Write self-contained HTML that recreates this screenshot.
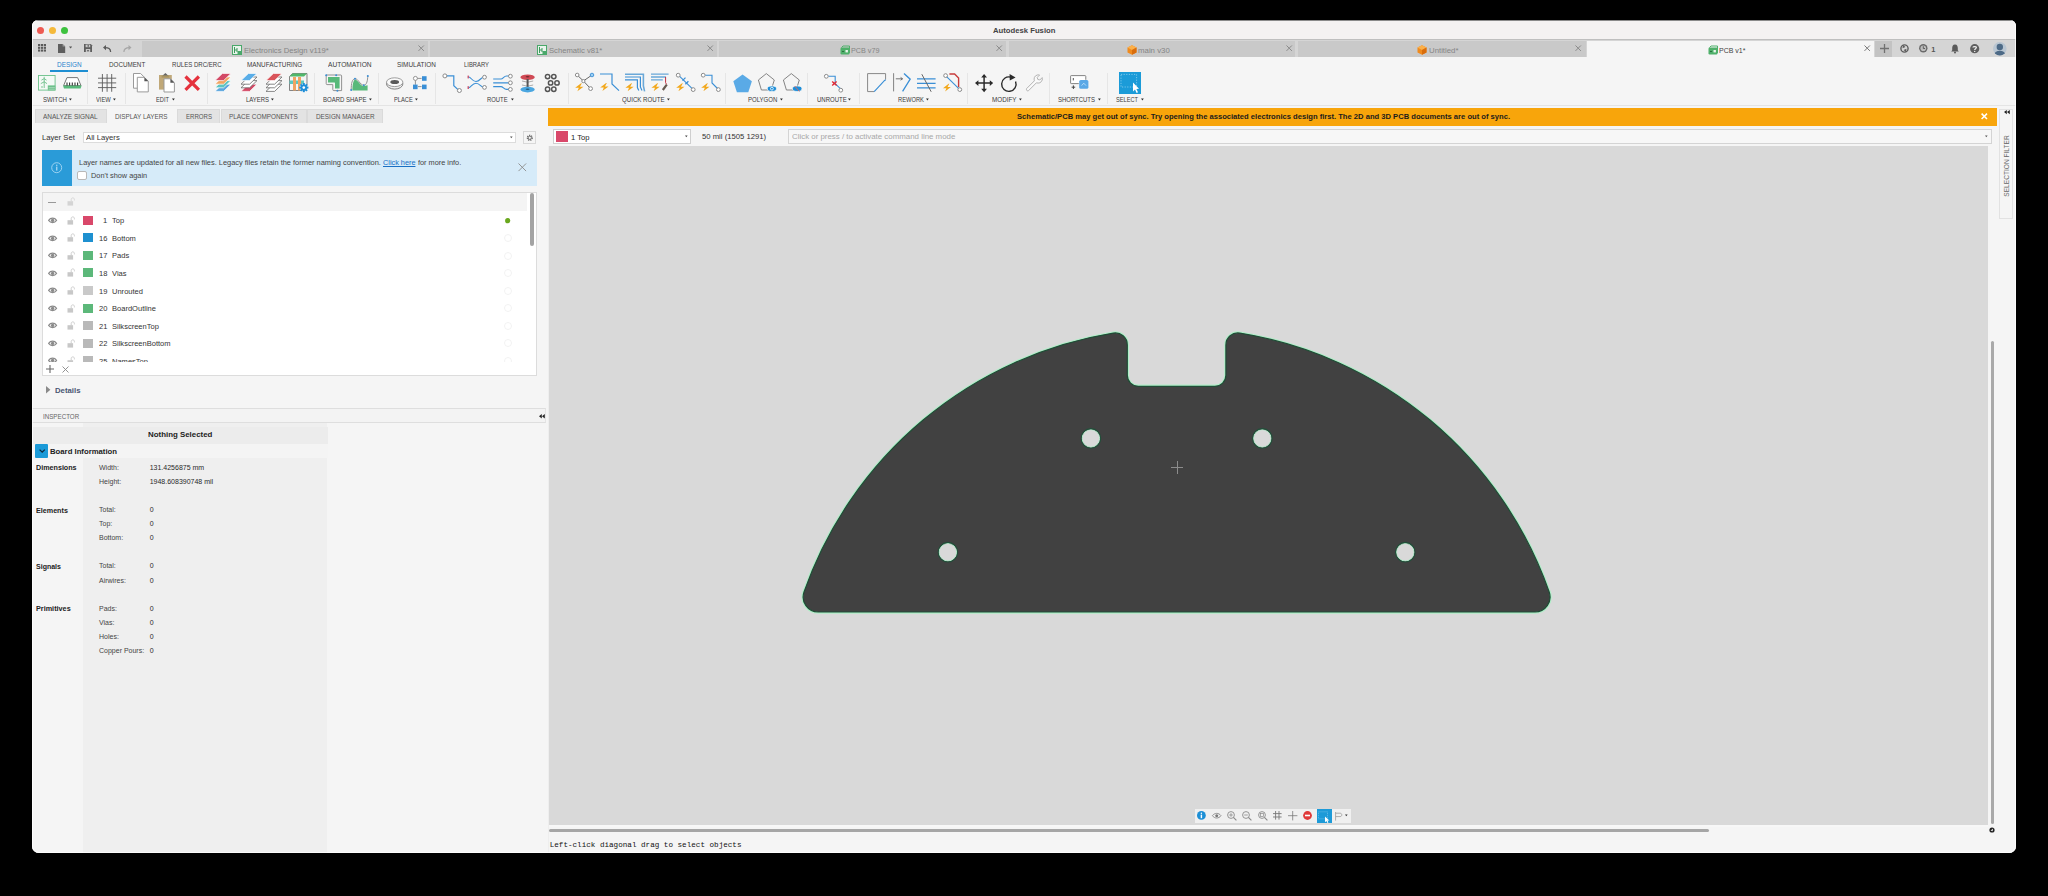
<!DOCTYPE html>
<html><head><meta charset="utf-8">
<style>
*{box-sizing:border-box;margin:0;padding:0}
html,body{width:2048px;height:896px;overflow:hidden;background:#000;font-family:"Liberation Sans",sans-serif;color:#333}
#win{position:absolute;left:32px;top:20px;width:1984px;height:833px;border-radius:6px 6px 7px 7px;overflow:hidden;background:#f5f5f5}
#pg{position:absolute;left:-32px;top:-20px;width:2048px;height:896px}
.a{position:absolute}
.t{position:absolute;white-space:nowrap;line-height:1;transform-origin:0 0}
svg{overflow:visible}
</style></head><body>
<div id="win"><div id="pg">

<div class="a" style="left:0px;top:20px;width:2048.00px;height:19.00px;background:#f4f2f2;"></div>
<div class="a" style="left:0px;top:20px;width:2048.00px;height:1.00px;background:#8a8a8a;"></div>
<div class="a" style="left:37.3px;top:27px;width:7.20px;height:7.20px;background:#ee5a52;border-radius:50%"></div>
<div class="a" style="left:49.15px;top:27px;width:7.20px;height:7.20px;background:#f5b93a;border-radius:50%"></div>
<div class="a" style="left:60.9px;top:27px;width:7.20px;height:7.20px;background:#3ec23f;border-radius:50%"></div>
<div class="t" style="left:992.5px;top:27.00px;font-size:7.82px;font-family:'Liberation Sans',sans-serif;font-weight:bold;color:#444;transform:scaleX(0.9853);">Autodesk Fusion</div>
<div class="a" style="left:0px;top:39px;width:2048.00px;height:18.00px;background:#d5d5d5;"></div>
<div class="a" style="left:0px;top:39px;width:2048.00px;height:1.00px;background:#bfbfbf;"></div>
<div class="a" style="left:142px;top:41px;width:286.00px;height:16.00px;background:#c9c9c9;"></div>
<div class="a" style="left:430px;top:41px;width:287.00px;height:16.00px;background:#c9c9c9;"></div>
<div class="a" style="left:719px;top:41px;width:287.00px;height:16.00px;background:#c9c9c9;"></div>
<div class="a" style="left:1009px;top:41px;width:286.00px;height:16.00px;background:#c9c9c9;"></div>
<div class="a" style="left:1298px;top:41px;width:288.00px;height:16.00px;background:#c9c9c9;"></div>
<div class="a" style="left:1587px;top:41px;width:287.00px;height:16.00px;background:#f5f5f5;"></div>
<div class="a" style="left:1875px;top:41px;width:17.00px;height:16.00px;background:#c3c3c3;"></div>
<div class="a" style="left:0px;top:57px;width:2048.00px;height:49.00px;background:#f5f5f5;"></div>
<div class="a" style="left:0px;top:105px;width:2048.00px;height:1.00px;background:#e4e4e4;"></div>
<div class="a" style="left:32px;top:106px;width:516.00px;height:747.00px;background:#f5f5f5;"></div>
<div class="a" style="left:548px;top:106px;width:1468.00px;height:747.00px;background:#f5f5f5;"></div>
<div class="a" style="left:548px;top:107.8px;width:1449.00px;height:17.90px;background:#f8a50b;"></div>
<div class="t" style="left:1016.5px;top:113.00px;font-size:7.54px;font-family:'Liberation Sans',sans-serif;font-weight:bold;color:#1c1c1c;transform:scaleX(1.0086);">Schematic/PCB may get out of sync. Try opening the associated electronics design first. The 2D and 3D PCB documents are out of sync.</div>
<div class="a" style="left:549px;top:146px;width:1439.00px;height:678.50px;background:#d9d9d9;"></div>
<svg class="a" style="left:0;top:0" width="2048" height="896" viewBox="0 0 2048 896">
<path d="M818.17,612.00 L1535.03,612.00 A15,15 0 0 0 1549.18,592.03 A394.9,394.9 0 0 0 1239.82,333.09 A12,12 0 0 0 1225.90,344.94 L1225.90,375.30 A11,11 0 0 1 1214.90,386.30 L1138.30,386.30 A11,11 0 0 1 1127.30,375.30 L1127.30,344.94 A12,12 0 0 0 1113.38,333.09 A394.9,394.9 0 0 0 804.02,592.03 A15,15 0 0 0 818.17,612.00 Z" fill="none" stroke="#b0eec8" stroke-width="3.4"/>
<path d="M818.17,612.00 L1535.03,612.00 A15,15 0 0 0 1549.18,592.03 A394.9,394.9 0 0 0 1239.82,333.09 A12,12 0 0 0 1225.90,344.94 L1225.90,375.30 A11,11 0 0 1 1214.90,386.30 L1138.30,386.30 A11,11 0 0 1 1127.30,375.30 L1127.30,344.94 A12,12 0 0 0 1113.38,333.09 A394.9,394.9 0 0 0 804.02,592.03 A15,15 0 0 0 818.17,612.00 Z" fill="#414141" stroke="#1f4d36" stroke-width="1.2"/>
<g fill="#d9d9d9" stroke="#b2ecca" stroke-width="1.0"><circle cx="1090.9" cy="438.4" r="8.8"/><circle cx="1262.3" cy="438.4" r="8.8"/><circle cx="947.9" cy="552.2" r="8.8"/><circle cx="1405.3" cy="552.2" r="8.8"/></g>
<g fill="none" stroke="#21503a" stroke-width="1.1"><circle cx="1090.9" cy="438.4" r="9.8"/><circle cx="1262.3" cy="438.4" r="9.8"/><circle cx="947.9" cy="552.2" r="9.8"/><circle cx="1405.3" cy="552.2" r="9.8"/></g>
<g stroke="#8c8c8c" stroke-width="1"><line x1="1171" y1="467.5" x2="1183" y2="467.5"/><line x1="1177.5" y1="461" x2="1177.5" y2="474"/></g>
</svg>
<svg class="a" style="left:38.1px;top:44.1px" width="8.4" height="8" viewBox="0 0 8.4 8"><rect x="0.00" y="0.00" width="2.2" height="2.1" fill="#5a5a5a"/><rect x="2.90" y="0.00" width="2.2" height="2.1" fill="#5a5a5a"/><rect x="5.80" y="0.00" width="2.2" height="2.1" fill="#5a5a5a"/><rect x="0.00" y="2.75" width="2.2" height="2.1" fill="#5a5a5a"/><rect x="2.90" y="2.75" width="2.2" height="2.1" fill="#5a5a5a"/><rect x="5.80" y="2.75" width="2.2" height="2.1" fill="#5a5a5a"/><rect x="0.00" y="5.50" width="2.2" height="2.1" fill="#5a5a5a"/><rect x="2.90" y="5.50" width="2.2" height="2.1" fill="#5a5a5a"/><rect x="5.80" y="5.50" width="2.2" height="2.1" fill="#5a5a5a"/></svg>
<svg class="a" style="left:57.7px;top:43.9px" width="7.4" height="9" viewBox="0 0 7.4 9"><path d="M0,0 H4.6 L7.2,2.6 V8.9 H0Z" fill="#5e5e5e"/><path d="M4.6,0 V2.6 H7.2" fill="#9a9a9a"/></svg>
<svg class="a" style="left:68.9px;top:46.1px" width="4.2" height="3.0" viewBox="0 0 4.2 3.0"><path d="M0,0.5 L3.2,0.5 L1.6,2.5Z" fill="#555"/></svg>
<svg class="a" style="left:84px;top:44.4px" width="8" height="8" viewBox="0 0 8 8"><path d="M0,0 H6.8 L8,1.2 V8 H0Z" fill="#5e5e5e"/><rect x="1.6" y="0.6" width="4.6" height="2.6" fill="#c8c8c8"/><rect x="3.6" y="1" width="1.2" height="1.8" fill="#5e5e5e"/><rect x="1.8" y="5" width="4.4" height="3" fill="#c8c8c8"/><rect x="3.2" y="6" width="1.6" height="1.4" fill="#5e5e5e"/></svg>
<svg class="a" style="left:103px;top:45px" width="8.5" height="7.2" viewBox="0 0 8.5 7.2"><path d="M7.6,7 C7.6,3.5 5.5,2.6 2,2.6" fill="none" stroke="#5a5a5a" stroke-width="1.3"/><path d="M0,2.6 L3,0 V5.2Z" fill="#5a5a5a"/></svg>
<svg class="a" style="left:122.5px;top:45px" width="8.5" height="7.2" viewBox="0 0 8.5 7.2"><path d="M0.9,7 C0.9,3.5 3,2.6 6.5,2.6" fill="none" stroke="#a6a6a6" stroke-width="1.2"/><path d="M8.5,2.6 L5.5,0 V5.2Z" fill="#a6a6a6"/></svg>
<svg class="a" style="left:232.2px;top:45.4px" width="10" height="10" viewBox="0 0 10 10"><rect x="0.5" y="0.5" width="9" height="9" fill="#e9f4ec" stroke="#4aa86a" stroke-width="1"/><path d="M2.5,2 V8 M2.5,5 H5 M5,3 V7" stroke="#3d9a5c" stroke-width="1" fill="none"/><rect x="5.5" y="6" width="4" height="3.5" fill="#4aa86a"/></svg>
<div class="t" style="left:243.9px;top:47.00px;font-size:7.96px;font-family:'Liberation Sans',sans-serif;color:#858585;transform:scaleX(0.9647);">Electronics Design v119*</div>
<svg class="a" style="left:417.8px;top:45.4px" width="6.4" height="6.4" viewBox="0 0 6.4 6.4"><path d="M0.5,0.5 L5.9,5.9 M5.9,0.5 L0.5,5.9" stroke="#8a8a8a" stroke-width="1"/></svg>
<svg class="a" style="left:536.6px;top:45.4px" width="10" height="10" viewBox="0 0 10 10"><rect x="0.5" y="0.5" width="9" height="9" fill="#e9f4ec" stroke="#4aa86a" stroke-width="1"/><path d="M2.5,2 V8 M2.5,5 H5 M5,3 V7" stroke="#3d9a5c" stroke-width="1" fill="none"/><rect x="5.5" y="6" width="4" height="3.5" fill="#4aa86a"/></svg>
<div class="t" style="left:549px;top:47.00px;font-size:7.96px;font-family:'Liberation Sans',sans-serif;color:#858585;transform:scaleX(0.9637);">Schematic v81*</div>
<svg class="a" style="left:706.8px;top:45.4px" width="6.4" height="6.4" viewBox="0 0 6.4 6.4"><path d="M0.5,0.5 L5.9,5.9 M5.9,0.5 L0.5,5.9" stroke="#8a8a8a" stroke-width="1"/></svg>
<svg class="a" style="left:839.8px;top:45.6px" width="10" height="9" viewBox="0 0 10 9"><rect x="0.5" y="1.5" width="9" height="7" rx="1.2" fill="#4fb06a"/><path d="M1.5,1.5 L3,0 H9.5 V7" fill="none" stroke="#4fb06a" stroke-width="1"/><rect x="5.5" y="4" width="2.4" height="2.4" fill="#e8f5ea"/><rect x="2" y="5" width="2" height="1" fill="#2d6f40"/></svg>
<div class="t" style="left:850.5px;top:47.00px;font-size:7.96px;font-family:'Liberation Sans',sans-serif;color:#858585;transform:scaleX(0.9072);">PCB v79</div>
<svg class="a" style="left:996.0999999999999px;top:45.4px" width="6.4" height="6.4" viewBox="0 0 6.4 6.4"><path d="M0.5,0.5 L5.9,5.9 M5.9,0.5 L0.5,5.9" stroke="#8a8a8a" stroke-width="1"/></svg>
<svg class="a" style="left:1126.8px;top:45.2px" width="10" height="10" viewBox="0 0 10 10"><path d="M5,0.3 L9.5,2.6 V7.5 L5,9.8 L0.5,7.5 V2.6Z" fill="#f08a1c"/><path d="M5,0.3 L9.5,2.6 L5,4.9 L0.5,2.6Z" fill="#fbb04a"/><path d="M5,4.9 V9.8 L9.5,7.5 V2.6Z" fill="#d96d0c"/></svg>
<div class="t" style="left:1138.2px;top:47.00px;font-size:7.96px;font-family:'Liberation Sans',sans-serif;color:#858585;transform:scaleX(0.9845);">main v30</div>
<svg class="a" style="left:1285.5px;top:45.4px" width="6.4" height="6.4" viewBox="0 0 6.4 6.4"><path d="M0.5,0.5 L5.9,5.9 M5.9,0.5 L0.5,5.9" stroke="#8a8a8a" stroke-width="1"/></svg>
<svg class="a" style="left:1416.6px;top:45.2px" width="10" height="10" viewBox="0 0 10 10"><path d="M5,0.3 L9.5,2.6 V7.5 L5,9.8 L0.5,7.5 V2.6Z" fill="#f08a1c"/><path d="M5,0.3 L9.5,2.6 L5,4.9 L0.5,2.6Z" fill="#fbb04a"/><path d="M5,4.9 V9.8 L9.5,7.5 V2.6Z" fill="#d96d0c"/></svg>
<div class="t" style="left:1428.5px;top:47.00px;font-size:7.96px;font-family:'Liberation Sans',sans-serif;color:#858585;transform:scaleX(0.9804);">Untitled*</div>
<svg class="a" style="left:1574.7px;top:45.4px" width="6.4" height="6.4" viewBox="0 0 6.4 6.4"><path d="M0.5,0.5 L5.9,5.9 M5.9,0.5 L0.5,5.9" stroke="#8a8a8a" stroke-width="1"/></svg>
<svg class="a" style="left:1707.8px;top:45.6px" width="10" height="9" viewBox="0 0 10 9"><rect x="0.5" y="1.5" width="9" height="7" rx="1.2" fill="#4fb06a"/><path d="M1.5,1.5 L3,0 H9.5 V7" fill="none" stroke="#4fb06a" stroke-width="1"/><rect x="5.5" y="4" width="2.4" height="2.4" fill="#e8f5ea"/><rect x="2" y="5" width="2" height="1" fill="#2d6f40"/></svg>
<div class="t" style="left:1719px;top:47.00px;font-size:7.96px;font-family:'Liberation Sans',sans-serif;color:#444;transform:scaleX(0.8808);">PCB v1*</div>
<svg class="a" style="left:1863.8px;top:45.4px" width="6.4" height="6.4" viewBox="0 0 6.4 6.4"><path d="M0.5,0.5 L5.9,5.9 M5.9,0.5 L0.5,5.9" stroke="#777" stroke-width="1"/></svg>
<svg class="a" style="left:1880.2px;top:44.2px" width="9" height="9" viewBox="0 0 9 9"><path d="M4.5,0 V9 M0,4.5 H9" stroke="#707070" stroke-width="1.3"/></svg>
<svg class="a" style="left:1899.5px;top:43.9px" width="9" height="9" viewBox="0 0 9 9"><circle cx="4.5" cy="4.5" r="3.6" fill="none" stroke="#5c5c5c" stroke-width="1.4"/><path d="M3,1 L5.5,3 L2.5,4.2Z M6,8 L3.5,6 L6.5,4.8Z" fill="#5c5c5c"/></svg>
<svg class="a" style="left:1918.8px;top:44.2px" width="9" height="9" viewBox="0 0 9 9"><circle cx="4.3" cy="4.3" r="4.2" fill="#6a6a6a"/><circle cx="4.3" cy="4.3" r="2.8" fill="#bdbdbd"/><path d="M4.3,2.2 V4.5 H6" stroke="#555" stroke-width="0.9" fill="none"/></svg>
<div class="t" style="left:1931.2px;top:46.00px;font-size:7.40px;font-family:'Liberation Sans',sans-serif;font-weight:bold;color:#555;">1</div>
<svg class="a" style="left:1950.8px;top:44px" width="8" height="9.4" viewBox="0 0 8 9.4"><path d="M4,0.6 C6.3,0.6 6.8,2.6 6.8,4.4 V6.3 L7.8,7.5 H0.2 L1.2,6.3 V4.4 C1.2,2.6 1.7,0.6 4,0.6Z" fill="#5a5a5a"/><circle cx="4" cy="8.4" r="1" fill="#5a5a5a"/></svg>
<svg class="a" style="left:1969.6px;top:43.9px" width="9.4" height="9.4" viewBox="0 0 9.4 9.4"><circle cx="4.7" cy="4.7" r="4.6" fill="#5e5e5e"/><path d="M3,3.6 C3,2.2 6.4,2.2 6.4,3.6 C6.4,4.8 4.7,4.7 4.7,6" fill="none" stroke="#f0f0f0" stroke-width="1.2"/><circle cx="4.7" cy="7.4" r="0.7" fill="#f0f0f0"/></svg>
<svg class="a" style="left:1992.6px;top:41.8px" width="13.6" height="13.6" viewBox="0 0 13.6 13.6"><defs><clipPath id="av"><circle cx="6.8" cy="6.8" r="6.8"/></clipPath></defs><circle cx="6.8" cy="6.8" r="6.8" fill="#b9c6d2"/><g clip-path="url(#av)"><circle cx="6.8" cy="5" r="3.2" fill="#4d6a86"/><ellipse cx="6.8" cy="13.5" rx="5.8" ry="4.8" fill="#4d6a86"/></g></svg>
<div class="t" style="left:56.7px;top:61.00px;font-size:7.26px;font-family:'Liberation Sans',sans-serif;color:#2682cc;transform:scaleX(0.8835);">DESIGN</div>
<div class="t" style="left:108.5px;top:61.00px;font-size:7.26px;font-family:'Liberation Sans',sans-serif;color:#3c3c3c;transform:scaleX(0.8651);">DOCUMENT</div>
<div class="t" style="left:171.5px;top:61.00px;font-size:7.26px;font-family:'Liberation Sans',sans-serif;color:#3c3c3c;transform:scaleX(0.8361);">RULES DRC/ERC</div>
<div class="t" style="left:247px;top:61.00px;font-size:7.26px;font-family:'Liberation Sans',sans-serif;color:#3c3c3c;transform:scaleX(0.8746);">MANUFACTURING</div>
<div class="t" style="left:327.8px;top:61.00px;font-size:7.26px;font-family:'Liberation Sans',sans-serif;color:#3c3c3c;transform:scaleX(0.9153);">AUTOMATION</div>
<div class="t" style="left:397.1px;top:61.00px;font-size:7.26px;font-family:'Liberation Sans',sans-serif;color:#3c3c3c;transform:scaleX(0.8872);">SIMULATION</div>
<div class="t" style="left:463.75px;top:61.00px;font-size:7.26px;font-family:'Liberation Sans',sans-serif;color:#3c3c3c;transform:scaleX(0.8078);">LIBRARY</div>
<div class="a" style="left:50px;top:70px;width:38.00px;height:2.00px;background:#1f8fd2;"></div>
<div class="t" style="left:43px;top:97.00px;font-size:6.70px;font-family:'Liberation Sans',sans-serif;color:#3a3a3a;transform:scaleX(0.9077);">SWITCH</div>
<svg class="a" style="left:69.1px;top:98.1px" width="3.8" height="3" viewBox="0 0 3.8 3"><path d="M0,0.5 L2.8,0.5 L1.4,2.5Z" fill="#2a2a2a"/></svg>
<div class="t" style="left:96px;top:97.00px;font-size:6.70px;font-family:'Liberation Sans',sans-serif;color:#3a3a3a;transform:scaleX(0.8580);">VIEW</div>
<svg class="a" style="left:113.1px;top:98.1px" width="3.8" height="3" viewBox="0 0 3.8 3"><path d="M0,0.5 L2.8,0.5 L1.4,2.5Z" fill="#2a2a2a"/></svg>
<div class="t" style="left:156px;top:97.00px;font-size:6.70px;font-family:'Liberation Sans',sans-serif;color:#3a3a3a;transform:scaleX(0.8513);">EDIT</div>
<svg class="a" style="left:171.9px;top:98.1px" width="3.8" height="3" viewBox="0 0 3.8 3"><path d="M0,0.5 L2.8,0.5 L1.4,2.5Z" fill="#2a2a2a"/></svg>
<div class="t" style="left:245.7px;top:97.00px;font-size:6.70px;font-family:'Liberation Sans',sans-serif;color:#3a3a3a;transform:scaleX(0.8899);">LAYERS</div>
<svg class="a" style="left:270.7px;top:98.1px" width="3.8" height="3" viewBox="0 0 3.8 3"><path d="M0,0.5 L2.8,0.5 L1.4,2.5Z" fill="#2a2a2a"/></svg>
<div class="t" style="left:323px;top:97.00px;font-size:6.70px;font-family:'Liberation Sans',sans-serif;color:#3a3a3a;transform:scaleX(0.8982);">BOARD SHAPE</div>
<svg class="a" style="left:368.7px;top:98.1px" width="3.8" height="3" viewBox="0 0 3.8 3"><path d="M0,0.5 L2.8,0.5 L1.4,2.5Z" fill="#2a2a2a"/></svg>
<div class="t" style="left:394.1px;top:97.00px;font-size:6.70px;font-family:'Liberation Sans',sans-serif;color:#3a3a3a;transform:scaleX(0.8551);">PLACE</div>
<svg class="a" style="left:415.3px;top:98.1px" width="3.8" height="3" viewBox="0 0 3.8 3"><path d="M0,0.5 L2.8,0.5 L1.4,2.5Z" fill="#2a2a2a"/></svg>
<div class="t" style="left:487.4px;top:97.00px;font-size:6.70px;font-family:'Liberation Sans',sans-serif;color:#3a3a3a;transform:scaleX(0.8780);">ROUTE</div>
<svg class="a" style="left:510.6px;top:98.1px" width="3.8" height="3" viewBox="0 0 3.8 3"><path d="M0,0.5 L2.8,0.5 L1.4,2.5Z" fill="#2a2a2a"/></svg>
<div class="t" style="left:622.3px;top:97.00px;font-size:6.70px;font-family:'Liberation Sans',sans-serif;color:#3a3a3a;transform:scaleX(0.9150);">QUICK ROUTE</div>
<svg class="a" style="left:667.2px;top:98.1px" width="3.8" height="3" viewBox="0 0 3.8 3"><path d="M0,0.5 L2.8,0.5 L1.4,2.5Z" fill="#2a2a2a"/></svg>
<div class="t" style="left:747.9px;top:97.00px;font-size:6.70px;font-family:'Liberation Sans',sans-serif;color:#3a3a3a;transform:scaleX(0.9002);">POLYGON</div>
<svg class="a" style="left:779.7px;top:98.1px" width="3.8" height="3" viewBox="0 0 3.8 3"><path d="M0,0.5 L2.8,0.5 L1.4,2.5Z" fill="#2a2a2a"/></svg>
<div class="t" style="left:816.6px;top:97.00px;font-size:6.70px;font-family:'Liberation Sans',sans-serif;color:#3a3a3a;transform:scaleX(0.8960);">UNROUTE</div>
<svg class="a" style="left:848.4px;top:98.1px" width="3.8" height="3" viewBox="0 0 3.8 3"><path d="M0,0.5 L2.8,0.5 L1.4,2.5Z" fill="#2a2a2a"/></svg>
<div class="t" style="left:898px;top:97.00px;font-size:6.70px;font-family:'Liberation Sans',sans-serif;color:#3a3a3a;transform:scaleX(0.8618);">REWORK</div>
<svg class="a" style="left:926px;top:98.1px" width="3.8" height="3" viewBox="0 0 3.8 3"><path d="M0,0.5 L2.8,0.5 L1.4,2.5Z" fill="#2a2a2a"/></svg>
<div class="t" style="left:992.2px;top:97.00px;font-size:6.70px;font-family:'Liberation Sans',sans-serif;color:#3a3a3a;transform:scaleX(0.9437);">MODIFY</div>
<svg class="a" style="left:1019px;top:98.1px" width="3.8" height="3" viewBox="0 0 3.8 3"><path d="M0,0.5 L2.8,0.5 L1.4,2.5Z" fill="#2a2a2a"/></svg>
<div class="t" style="left:1058.1px;top:97.00px;font-size:6.70px;font-family:'Liberation Sans',sans-serif;color:#3a3a3a;transform:scaleX(0.8896);">SHORTCUTS</div>
<svg class="a" style="left:1097.6px;top:98.1px" width="3.8" height="3" viewBox="0 0 3.8 3"><path d="M0,0.5 L2.8,0.5 L1.4,2.5Z" fill="#2a2a2a"/></svg>
<div class="t" style="left:1116.1px;top:97.00px;font-size:6.70px;font-family:'Liberation Sans',sans-serif;color:#3a3a3a;transform:scaleX(0.8436);">SELECT</div>
<svg class="a" style="left:1141px;top:98.1px" width="3.8" height="3" viewBox="0 0 3.8 3"><path d="M0,0.5 L2.8,0.5 L1.4,2.5Z" fill="#2a2a2a"/></svg>
<div class="a" style="left:87.2px;top:73px;width:1.00px;height:31.00px;background:#e6e6e6;"></div>
<div class="a" style="left:124.7px;top:73px;width:1.00px;height:31.00px;background:#e6e6e6;"></div>
<div class="a" style="left:206.5px;top:73px;width:1.00px;height:31.00px;background:#e6e6e6;"></div>
<div class="a" style="left:314.2px;top:73px;width:1.00px;height:31.00px;background:#e6e6e6;"></div>
<div class="a" style="left:378.4px;top:73px;width:1.00px;height:31.00px;background:#e6e6e6;"></div>
<div class="a" style="left:435px;top:73px;width:1.00px;height:31.00px;background:#e6e6e6;"></div>
<div class="a" style="left:567.5px;top:73px;width:1.00px;height:31.00px;background:#e6e6e6;"></div>
<div class="a" style="left:725.2px;top:73px;width:1.00px;height:31.00px;background:#e6e6e6;"></div>
<div class="a" style="left:807.3px;top:73px;width:1.00px;height:31.00px;background:#e6e6e6;"></div>
<div class="a" style="left:859.4px;top:73px;width:1.00px;height:31.00px;background:#e6e6e6;"></div>
<div class="a" style="left:967.4px;top:73px;width:1.00px;height:31.00px;background:#e6e6e6;"></div>
<div class="a" style="left:1049.3px;top:73px;width:1.00px;height:31.00px;background:#e6e6e6;"></div>
<div class="a" style="left:1107.4px;top:73px;width:1.00px;height:31.00px;background:#e6e6e6;"></div>
<svg class="a" style="left:38.2px;top:75.2px" width="17.6" height="15.6" viewBox="0 0 17.6 15.6"><rect x="0.5" y="0.5" width="16.6" height="14.6" fill="#f4faf6" stroke="#6cc08a" stroke-width="0.9"/><path d="M6.2,1.8 V13 M3.4,5.2 L6.2,3.6 L8.6,5.2 M2.8,8.6 L6.2,6.8 L9,8.6 M3,12 H5" stroke="#6cc08a" stroke-width="0.9" fill="none"/><rect x="9.8" y="10.4" width="7.6" height="5" fill="#6cc08a"/><path d="M10.6,12.6 H16.8 M10.6,14.2 H16.8" stroke="#d8efe0" stroke-width="0.5"/></svg>
<svg class="a" style="left:63px;top:77px" width="18.6" height="11.8" viewBox="0 0 18.6 11.8"><path d="M4,0.6 H14.6 L18,8.6 H0.6Z" fill="#fff" stroke="#777" stroke-width="1"/><path d="M0,8.4 H18.6 L17.6,11.6 H1Z" fill="#58b97a"/><path d="M4,5.6 V8.4 M6.6,5.6 V8.4 M9.3,5.6 V8.4 M12,5.6 V8.4 M14.6,5.6 V8.4" stroke="#333" stroke-width="1.1"/></svg>
<svg class="a" style="left:97.9px;top:74.2px" width="18.2" height="17.8" viewBox="0 0 18.2 17.8"><path d="M4.4,0 V17.8 M9.1,0 V17.8 M13.7,0 V17.8 M0,4.2 H18.2 M0,8.9 H18.2 M0,13.6 H18.2" stroke="#5a5a5a" stroke-width="0.9"/></svg>
<svg class="a" style="left:133.2px;top:73.2px" width="16" height="19.4" viewBox="0 0 16 19.4"><path d="M0.5,0.5 H7.6 L11,3.9 V15.2 H0.5Z" fill="#fff" stroke="#9a9a9a" stroke-width="1"/><path d="M4.3,4.3 H11.4 L15.3,8.2 V18.9 H4.3Z" fill="#fff" stroke="#9a9a9a" stroke-width="1"/><path d="M11.4,4.3 V8.2 H15.3Z" fill="#555"/></svg>
<svg class="a" style="left:158.8px;top:73.2px" width="16" height="19.4" viewBox="0 0 16 19.4"><rect x="0" y="2" width="12.8" height="14.6" fill="#c0a878"/><path d="M3.4,2.8 L6.4,0 L9.4,2.8Z" fill="#666"/><rect x="2.6" y="2.6" width="7.6" height="2" fill="#a89462"/><path d="M5,5.8 H11.4 L15.4,9.8 V19 H5Z" fill="#fff" stroke="#9a9a9a" stroke-width="1"/><path d="M11.4,5.8 V9.8 H15.4Z" fill="#555"/></svg>
<svg class="a" style="left:183.7px;top:74.5px" width="16.4" height="16.4" viewBox="0 0 16.4 16.4"><path d="M1.5,1.5 L14.9,14.9 M14.9,1.5 L1.5,14.9" stroke="#e5323d" stroke-width="3.2"/></svg>
<svg class="a" style="left:215.4px;top:73.4px" width="16.2" height="18.8" viewBox="0 0 16.2 18.8"><path d="M7.4,11.20 H16 L8.6,18.40 H0Z" fill="#5aa6de" stroke="#fff" stroke-width="0.7"/><path d="M7.4,7.60 H16 L8.6,14.80 H0Z" fill="#5cc4c0" stroke="#fff" stroke-width="0.7"/><path d="M7.4,4.00 H16 L8.6,11.20 H0Z" fill="#f0a462" stroke="#fff" stroke-width="0.7"/><path d="M7.4,0.40 H16 L8.6,7.60 H0Z" fill="#d34a66" stroke="#fff" stroke-width="0.7"/></svg>
<svg class="a" style="left:240.6px;top:73.4px" width="16.2" height="18.8" viewBox="0 0 16.2 18.8"><path d="M7.4,11.20 H16 L8.6,18.40 H0Z" fill="#d34a66" stroke="#fff" stroke-width="0.7"/><path d="M7.4,7.60 H16 L8.6,14.80 H0Z" fill="#fff" stroke="#6a6a6a" stroke-width="0.8"/><path d="M7.4,4.00 H16 L8.6,11.20 H0Z" fill="#fff" stroke="#6a6a6a" stroke-width="0.8"/><path d="M7.4,0.40 H16 L8.6,7.60 H0Z" fill="#5aaee8" stroke="#fff" stroke-width="0.7"/></svg>
<svg class="a" style="left:265.8px;top:73.4px" width="16.2" height="18.8" viewBox="0 0 16.2 18.8"><path d="M7.4,11.20 H16 L8.6,18.40 H0Z" fill="#fff" stroke="#6a6a6a" stroke-width="0.8"/><path d="M7.4,7.60 H16 L8.6,14.80 H0Z" fill="#fff" stroke="#6a6a6a" stroke-width="0.8"/><path d="M7.4,4.00 H16 L8.6,11.20 H0Z" fill="#fff" stroke="#6a6a6a" stroke-width="0.8"/><path d="M7.4,0.40 H16 L8.6,7.60 H0Z" fill="#d9545a" stroke="#fff" stroke-width="0.7"/></svg>
<svg class="a" style="left:289.4px;top:73px" width="19.6" height="19.2" viewBox="0 0 19.6 19.2"><path d="M0.5,3.5 L3.5,0.5 H18 V14.5 L15,17.5 H0.5Z" fill="#f4f4f4" stroke="#666" stroke-width="0.8"/><path d="M0.5,3.5 L3.5,0.5 H18 L15,3.5Z" fill="#4fb86a"/><rect x="0.5" y="7.5" width="14.5" height="3.5" fill="#5cc8c0"/><rect x="4" y="4" width="3" height="13.5" fill="#f0a462"/><rect x="9" y="4" width="3" height="13.5" fill="#f0a462"/><g transform="translate(14.8,14.6)"><circle r="4.2" fill="#f5f5f5"/><rect x="-1" y="-4.6" width="2" height="9.2" fill="#1e8ed8" transform="rotate(0)"/><rect x="-1" y="-4.6" width="2" height="9.2" fill="#1e8ed8" transform="rotate(45)"/><rect x="-1" y="-4.6" width="2" height="9.2" fill="#1e8ed8" transform="rotate(90)"/><rect x="-1" y="-4.6" width="2" height="9.2" fill="#1e8ed8" transform="rotate(135)"/><circle r="3.2" fill="#1e8ed8"/><circle r="1.3" fill="#fff"/></g></svg>
<svg class="a" style="left:325.2px;top:73.6px" width="17.8" height="17.8" viewBox="0 0 17.8 17.8"><path d="M1.2,1 H15.8 Q16.6,1 16.6,2 V16.6 H8.8 Q7.8,16.6 7.8,15.6 V10.6 H2 Q1.2,10.6 1.2,9.6Z" fill="none" stroke="#888" stroke-width="0.9"/><path d="M3,3 H14.6 V14.6 H10 V9 Q10,8.6 9.6,8.6 H3Z" fill="#58b97a"/><circle cx="1.2" cy="1.2" r="1" fill="#3a8fd6"/><circle cx="11.2" cy="1.2" r="1" fill="#3a8fd6"/><circle cx="12.4" cy="16.8" r="1" fill="#3a8fd6"/></svg>
<svg class="a" style="left:350px;top:75px" width="19.4" height="16" viewBox="0 0 19.4 16"><path d="M1.2,15.4 C1.2,8 2.2,4 5,3.8 C8.5,3.5 9.6,10 13.8,10.2 C17,10.2 17.6,5 17.8,0.8" fill="none" stroke="#888" stroke-width="0.9"/><path d="M2.4,15.6 C2.4,9 3.6,4.8 5,4.8 C8.5,4.8 9.6,11 13.8,11 L17.6,10.2 V15.6Z" fill="#58b97a"/><circle cx="1.2" cy="15" r="1" fill="#3a8fd6"/><circle cx="5" cy="3.8" r="1" fill="#3a8fd6"/><circle cx="13.8" cy="10.2" r="1" fill="#3a8fd6"/><circle cx="17.8" cy="0.9" r="1" fill="#3a8fd6"/></svg>
<svg class="a" style="left:386px;top:76.6px" width="17.4" height="12.6" viewBox="0 0 17.4 12.6"><ellipse cx="8.7" cy="6.9" rx="8.2" ry="5.2" fill="#eee" stroke="#777" stroke-width="0.9"/><ellipse cx="8.7" cy="5.2" rx="8.2" ry="4.4" fill="#fafafa" stroke="#888" stroke-width="0.8"/><ellipse cx="8.7" cy="5" rx="4.4" ry="2" fill="#5a5a5a"/></svg>
<svg class="a" style="left:413px;top:76px" width="14" height="13.4" viewBox="0 0 14 13.4"><circle cx="2.4" cy="2.4" r="2" fill="#fff" stroke="#888" stroke-width="0.9"/><path d="M2.4,4.4 V8.8 M4.4,2.4 H8.6 M5,10.6 H8.6" stroke="#888" stroke-width="0.9"/><rect x="0" y="8.6" width="4.6" height="4.6" fill="#3a8fd6"/><rect x="9" y="0.2" width="4.6" height="4.6" fill="#3a8fd6"/><rect x="9" y="8.6" width="4.6" height="4.6" fill="#3a8fd6"/></svg>
<svg class="a" style="left:441.5px;top:73.5px" width="20" height="18.5" viewBox="0 0 20 18.5"><path d="M4.6,1.9 H11.8 V11.8 L16.8,16.4" fill="none" stroke="#3a8fd6" stroke-width="1.2"/><circle cx="2.9" cy="1.9" r="2" fill="#fff" stroke="#8a8a8a" stroke-width="1"/><circle cx="17.4" cy="16.5" r="2" fill="#fff" stroke="#8a8a8a" stroke-width="1"/></svg>
<svg class="a" style="left:466.5px;top:74.5px" width="20" height="16" viewBox="0 0 20 16"><path d="M1.8,2 C4,2 5,6.5 9,6.5 C13,6.5 14,2 17,2 M1.8,12.6 C4,12.6 5,8.2 9,8.2 C13,8.2 14,12.6 17,12.6" fill="none" stroke="#3a8fd6" stroke-width="1.1"/><rect x="0.6" y="0.6" width="1.2" height="2.8" fill="#c03a5a"/><rect x="0.6" y="11.2" width="1.2" height="2.8" fill="#c03a5a"/><circle cx="17.5" cy="2.2" r="1.9" fill="#fff" stroke="#8a8a8a" stroke-width="1"/><circle cx="17.5" cy="12.4" r="1.9" fill="#fff" stroke="#8a8a8a" stroke-width="1"/></svg>
<svg class="a" style="left:492.8px;top:73.8px" width="19.6" height="17.6" viewBox="0 0 19.6 17.6"><path d="M0.2,5 H8 C10,5 11,2 13.5,2 H16 M0.2,8.8 H16 M0.2,12.6 H8 C10,12.6 11,15.4 13.5,15.4 H16" fill="none" stroke="#3a8fd6" stroke-width="1.2"/><circle cx="17.4" cy="2.2" r="1.9" fill="#fff" stroke="#8a8a8a" stroke-width="1"/><circle cx="17.4" cy="8.8" r="1.9" fill="#fff" stroke="#8a8a8a" stroke-width="1"/><circle cx="17.4" cy="15.4" r="1.9" fill="#fff" stroke="#8a8a8a" stroke-width="1"/></svg>
<svg class="a" style="left:519.6px;top:73.5px" width="15.2" height="18.6" viewBox="0 0 15.2 18.6"><ellipse cx="7.6" cy="3.3" rx="7.2" ry="2.8" fill="#d04a55"/><ellipse cx="7.6" cy="2.8" rx="2" ry="0.8" fill="#7a2a30"/><path d="M2,7 Q7.6,9.5 13.2,7 M2,11 Q7.6,13.5 13.2,11" fill="none" stroke="#999" stroke-width="0.8"/><rect x="6.6" y="5" width="2" height="10" fill="#555"/><ellipse cx="7.6" cy="15.6" rx="7.2" ry="2.8" fill="#4aa6e0"/><ellipse cx="7.6" cy="15.2" rx="2" ry="0.8" fill="#245c80"/></svg>
<svg class="a" style="left:544.8px;top:74px" width="16" height="17.8" viewBox="0 0 16 17.8"><g fill="none" stroke="#555" stroke-width="1.5"><circle cx="2.6" cy="2.6" r="2.2"/><circle cx="8.8" cy="2.6" r="2.2"/><circle cx="5.6" cy="8.9" r="2.2"/><circle cx="12" cy="8.9" r="2.2"/><circle cx="2.6" cy="15.2" r="2.2"/><circle cx="8.8" cy="15.2" r="2.2"/></g></svg>
<svg class="a" style="left:575.2px;top:72.8px" width="19.4" height="18.8" viewBox="0 0 19.4 18.8"><path d="M2.2,2 L8.4,8 L17,2 M8.4,8 L15.2,15.2" stroke="#666" stroke-width="1" fill="none"/><circle cx="17" cy="2" r="1.8" fill="#9cd0f4" stroke="#3a8fd6" stroke-width="0.9"/><circle cx="2.2" cy="2" r="1.8" fill="#fff" stroke="#8a8a8a" stroke-width="1"/><circle cx="8.4" cy="8.1" r="1.6" fill="#fff" stroke="#8a8a8a" stroke-width="1"/><circle cx="15.6" cy="15.6" r="1.9" fill="#fff" stroke="#8a8a8a" stroke-width="1"/><path transform="translate(0.2,10.2) scale(1.0)" d="M5.9,0 L0,4.6 L3.6,4.6 L2.2,8.1 L8.3,3.5 L4.8,3.5 L6.6,0Z" fill="#f2a81c"/></svg>
<svg class="a" style="left:600px;top:73px" width="19.6" height="18.6" viewBox="0 0 19.6 18.6"><path d="M0,1 H12 V11 L19,17.6" fill="none" stroke="#3a8fd6" stroke-width="1.2"/><path transform="translate(0.2,10.0) scale(1.0)" d="M5.9,0 L0,4.6 L3.6,4.6 L2.2,8.1 L8.3,3.5 L4.8,3.5 L6.6,0Z" fill="#f2a81c"/></svg>
<svg class="a" style="left:625px;top:73px" width="19.6" height="18.8" viewBox="0 0 19.6 18.8"><path d="M0,1.2 H18.4 V13 L19.6,18.4" fill="none" stroke="#6aa8d8" stroke-width="1.6"/><path d="M0,4 H15.4 V14 L17,17.6 M0,6.8 H12.4 V14.6 L13.8,17.6" fill="none" stroke="#3a8fd6" stroke-width="1.2"/><path transform="translate(0.4,10.2) scale(1.0)" d="M5.9,0 L0,4.6 L3.6,4.6 L2.2,8.1 L8.3,3.5 L4.8,3.5 L6.6,0Z" fill="#f2a81c"/></svg>
<svg class="a" style="left:650.6px;top:73px" width="19.4" height="18.8" viewBox="0 0 19.4 18.8"><path d="M0,1.2 H17.6 M0,4 H15 M0,6.8 H11.8" fill="none" stroke="#6aa8d8" stroke-width="1.3"/><path d="M14.6,4 V9.6 L15.6,11.4" fill="none" stroke="#c03040" stroke-width="1"/><path d="M15.8,11.6 L11.8,17" stroke="#665a50" stroke-width="2.2"/><path transform="translate(0.4,10.2) scale(1.0)" d="M5.9,0 L0,4.6 L3.6,4.6 L2.2,8.1 L8.3,3.5 L4.8,3.5 L6.6,0Z" fill="#f2a81c"/></svg>
<svg class="a" style="left:675.6px;top:72.8px" width="19.6" height="19" viewBox="0 0 19.6 19"><path d="M2.4,2.2 L17,16.4" stroke="#3a8fd6" stroke-width="1.1"/><path d="M6.5,7.6 L9.5,4.6 M9.4,11.2 L12.4,8.2" stroke="#3a8fd6" stroke-width="1.3"/><circle cx="2.2" cy="2.2" r="1.9" fill="#fff" stroke="#8a8a8a" stroke-width="1"/><circle cx="17.2" cy="16.6" r="1.9" fill="#fff" stroke="#8a8a8a" stroke-width="1"/><path transform="translate(0.2,10.2) scale(1.0)" d="M5.9,0 L0,4.6 L3.6,4.6 L2.2,8.1 L8.3,3.5 L4.8,3.5 L6.6,0Z" fill="#f2a81c"/></svg>
<svg class="a" style="left:700.6px;top:73px" width="19.6" height="19" viewBox="0 0 19.6 19"><path d="M4.2,2.2 H11 V10 L17,16" fill="none" stroke="#3a8fd6" stroke-width="1.1"/><circle cx="2.2" cy="2.2" r="1.9" fill="#fff" stroke="#8a8a8a" stroke-width="1"/><circle cx="17.4" cy="16.6" r="1.9" fill="#fff" stroke="#8a8a8a" stroke-width="1"/><path transform="translate(0.2,10.2) scale(1.0)" d="M5.9,0 L0,4.6 L3.6,4.6 L2.2,8.1 L8.3,3.5 L4.8,3.5 L6.6,0Z" fill="#f2a81c"/></svg>
<svg class="a" style="left:732.6px;top:73.6px" width="19.2" height="18.4" viewBox="0 0 19.2 18.4"><path d="M9.6,0.4 L18.9,7.2 L15.3,18.2 H3.9 L0.3,7.2Z" fill="#5aaae6"/></svg>
<svg class="a" style="left:758px;top:73.4px" width="19" height="18.8" viewBox="0 0 19 18.8"><path d="M8.3,0.6 L16.3,7 L13.2,17 H3.4 L0.4,7Z" fill="none" stroke="#777" stroke-width="0.9"/><ellipse cx="13.9" cy="15.7" rx="4.6" ry="2.8" fill="#1e8ed8" stroke="#f5f5f5" stroke-width="0.8"/><circle cx="13.9" cy="15.7" r="1.4" fill="none" stroke="#fff" stroke-width="0.8"/></svg>
<svg class="a" style="left:782.8px;top:73.4px" width="19.4" height="18.8" viewBox="0 0 19.4 18.8"><path d="M8.3,0.6 L16.3,7 L13.2,17 H3.4 L0.4,7Z" fill="none" stroke="#777" stroke-width="0.9"/><ellipse cx="14.2" cy="15.7" rx="4.8" ry="2.8" fill="#1e8ed8" stroke="#f5f5f5" stroke-width="0.8"/><path d="M11.6,13 L16.4,18.4" stroke="#c86a6a" stroke-width="1"/></svg>
<svg class="a" style="left:824.4px;top:73.6px" width="19.2" height="18.6" viewBox="0 0 19.2 18.6"><path d="M4.2,2.3 H11.2 V9.6 L16.6,14.8" fill="none" stroke="#3a8fd6" stroke-width="1.1"/><path d="M8.2,7.4 L12.6,11.6 M12.6,7.4 L8.2,11.6" stroke="#e02a36" stroke-width="1.4"/><circle cx="2.3" cy="2.3" r="1.9" fill="#fff" stroke="#8a8a8a" stroke-width="1"/><circle cx="16.8" cy="16.2" r="1.9" fill="#fff" stroke="#8a8a8a" stroke-width="1"/></svg>
<svg class="a" style="left:866.8px;top:73px" width="19.4" height="19.2" viewBox="0 0 19.4 19.2"><path d="M7.2,18.6 H0.6 V0.6 H18.6 V6.6" fill="none" stroke="#888" stroke-width="1"/><path d="M7.2,18.6 L17.6,7.4 L18.8,6.8" fill="none" stroke="#3a8fd6" stroke-width="1.2"/></svg>
<svg class="a" style="left:892.6px;top:73.4px" width="18.6" height="18.8" viewBox="0 0 18.6 18.8"><path d="M0.6,0.2 V18.4" stroke="#777" stroke-width="0.9"/><path d="M2.8,5.8 H9.4" stroke="#555" stroke-width="0.8"/><path d="M7.6,4.4 L9.6,5.8 L7.6,7.2" fill="none" stroke="#555" stroke-width="0.8"/><path d="M11,0.4 L17.2,6.2 L9.6,18.4" fill="none" stroke="#3a8fd6" stroke-width="1.3"/></svg>
<svg class="a" style="left:917.4px;top:73.8px" width="19" height="18.2" viewBox="0 0 19 18.2"><path d="M0,4.8 H18.6 M0,9.4 H18.6 M0,13.8 H18.6" stroke="#3a8fd6" stroke-width="1.3"/><path d="M4.8,0.2 L14.2,17.8" stroke="#666" stroke-width="1"/></svg>
<svg class="a" style="left:943px;top:73px" width="19.8" height="19.2" viewBox="0 0 19.8 19.2"><path d="M2.8,2.8 L16.6,16.4" stroke="#3a8fd6" stroke-width="1.1"/><path d="M6.4,1 H11.6 L15.6,5 V14" fill="none" stroke="#c83c3c" stroke-width="1.4"/><circle cx="2.6" cy="2.6" r="1.9" fill="#fff" stroke="#8a8a8a" stroke-width="1"/><circle cx="16.8" cy="16.6" r="1.9" fill="#fff" stroke="#8a8a8a" stroke-width="1"/><path transform="translate(0,10.8) scale(0.95)" d="M5.9,0 L0,4.6 L3.6,4.6 L2.2,8.1 L8.3,3.5 L4.8,3.5 L6.6,0Z" fill="#f2a81c"/></svg>
<svg class="a" style="left:974.8px;top:73.8px" width="18.2" height="18.2" viewBox="0 0 18.2 18.2"><path d="M9.1,1.5 V16.7 M1.5,9.1 H16.7" stroke="#2a2a2a" stroke-width="1.5"/><path d="M9.1,0 L12,3.4 H6.2Z M9.1,18.2 L12,14.8 H6.2Z M0,9.1 L3.4,6.2 V12Z M18.2,9.1 L14.8,6.2 V12Z" fill="#2a2a2a"/></svg>
<svg class="a" style="left:1000.4px;top:73.8px" width="17.2" height="18.4" viewBox="0 0 17.2 18.4"><path d="M10.8,3.2 A7.2,7.2 0 1 0 15.6,7.6" fill="none" stroke="#2a2a2a" stroke-width="1.4"/><path d="M9.6,0 L15.6,3.4 L9.8,6.4Z" fill="#2a2a2a"/></svg>
<svg class="a" style="left:1024.6px;top:74px" width="18.4" height="18" viewBox="0 0 18.4 18"><path d="M1.6,14.6 L9.4,6.8 C8.6,4.6 9.4,1.8 12.2,1 C13.2,0.7 14,0.8 14.6,1 L12.2,3.4 L12.8,5.4 L14.8,6 L17.2,3.6 C17.4,4.2 17.5,5 17.2,6 C16.4,8.8 13.6,9.6 11.4,8.8 L3.6,16.6 C2.8,17.4 0.8,16.6 1.6,14.6Z" fill="#fafafa" stroke="#aaa" stroke-width="0.9"/></svg>
<svg class="a" style="left:1069.6px;top:75px" width="18.6" height="14" viewBox="0 0 18.6 14"><path d="M8.8,8.6 H1.2 Q0.6,8.6 0.6,8 V1.2 Q0.6,0.6 1.2,0.6 H15 Q15.8,0.6 15.8,1.4 V4.8" fill="#fff" stroke="#777" stroke-width="0.9"/><rect x="2.8" y="3" width="1" height="2.4" fill="#555"/><path d="M3.4,10.4 V14 M1.6,12.2 H5.2" stroke="#444" stroke-width="1"/><rect x="9.2" y="5" width="9.2" height="8.8" rx="1.6" fill="#5aa8e6"/><path d="M11.6,10.6 L13.8,8.2 L16,10.6" fill="none" stroke="#c8e4fa" stroke-width="0.8"/></svg>
<svg class="a" style="left:1118.8px;top:71.8px" width="22" height="22" viewBox="0 0 22 22"><rect x="0" y="0" width="22" height="22" fill="#1b9bd8"/><rect x="2" y="2.4" width="15.6" height="12.6" fill="none" stroke="#8fd0f0" stroke-width="0.8" stroke-dasharray="1.2 1.4"/><path d="M14,10.6 L14,19.4 L16,17.6 L17.6,21 L19,20.3 L17.4,17 L20,16.8Z" fill="#fff"/></svg>
<div class="a" style="left:34.5px;top:109.4px;width:72.50px;height:13.60px;background:#e3e3e3;border:1px solid #dadada;border-bottom:none"></div>
<div class="a" style="left:176.7px;top:109.4px;width:43.80px;height:13.60px;background:#e3e3e3;border:1px solid #dadada;border-bottom:none"></div>
<div class="a" style="left:220.5px;top:109.4px;width:86.50px;height:13.60px;background:#e3e3e3;border:1px solid #dadada;border-bottom:none"></div>
<div class="a" style="left:307px;top:109.4px;width:75.60px;height:13.60px;background:#e3e3e3;border:1px solid #dadada;border-bottom:none"></div>
<div class="t" style="left:43px;top:113.00px;font-size:7.26px;font-family:'Liberation Sans',sans-serif;color:#555;transform:scaleX(0.8952);">ANALYZE SIGNAL</div>
<div class="t" style="left:115.4px;top:113.00px;font-size:7.26px;font-family:'Liberation Sans',sans-serif;color:#555;transform:scaleX(0.8762);">DISPLAY LAYERS</div>
<div class="t" style="left:185.7px;top:113.00px;font-size:7.26px;font-family:'Liberation Sans',sans-serif;color:#555;transform:scaleX(0.8400);">ERRORS</div>
<div class="t" style="left:229.3px;top:113.00px;font-size:7.26px;font-family:'Liberation Sans',sans-serif;color:#555;transform:scaleX(0.8833);">PLACE COMPONENTS</div>
<div class="t" style="left:315.7px;top:113.00px;font-size:7.26px;font-family:'Liberation Sans',sans-serif;color:#555;transform:scaleX(0.8801);">DESIGN MANAGER</div>
<div class="t" style="left:42px;top:134.00px;font-size:7.82px;font-family:'Liberation Sans',sans-serif;color:#333;transform:scaleX(0.9798);">Layer Set</div>
<div class="a" style="left:83.2px;top:131.8px;width:432.80px;height:11.60px;background:#fff;border:1px solid #dcdcdc"></div>
<div class="t" style="left:86px;top:134.00px;font-size:7.82px;font-family:'Liberation Sans',sans-serif;color:#333;transform:scaleX(0.9843);">All Layers</div>
<svg class="a" style="left:509.5px;top:136.4px" width="3.6" height="2.8" viewBox="0 0 3.6 2.8"><path d="M0,0.5 L2.6,0.5 L1.3,2.3Z" fill="#555"/></svg>
<div class="a" style="left:523px;top:131.2px;width:12.60px;height:12.80px;background:#f5f5f5;border:1px solid #d8d8d8"></div>
<svg class="a" style="left:525.6px;top:133.8px" width="7.6" height="7.6" viewBox="0 0 7.6 7.6"><circle cx="3.8" cy="3.8" r="2.4" fill="none" stroke="#666" stroke-width="1.4" stroke-dasharray="1.1 0.8"/><circle cx="3.8" cy="3.8" r="1.6" fill="none" stroke="#666" stroke-width="0.8"/></svg>
<div class="a" style="left:42px;top:149.7px;width:495.30px;height:36.20px;background:#d6ebf9;"></div>
<div class="a" style="left:42px;top:149.7px;width:29.70px;height:36.20px;background:#2a9bd8;"></div>
<svg class="a" style="left:51.2px;top:162px" width="11.4" height="11.4" viewBox="0 0 11.4 11.4"><circle cx="5.7" cy="5.7" r="5" fill="none" stroke="#a8d8f4" stroke-width="0.9"/><rect x="5.1" y="4.6" width="1.3" height="4" fill="#a8d8f4"/><circle cx="5.75" cy="3.2" r="0.75" fill="#a8d8f4"/></svg>
<div class="t" style="left:78.7px;top:159.00px;font-size:7.54px;font-family:'Liberation Sans',sans-serif;color:#444;transform:scaleX(0.9852);">Layer names are updated for all new files. Legacy files retain the former naming convention.</div>
<div class="t" style="left:383px;top:159.00px;font-size:7.54px;font-family:'Liberation Sans',sans-serif;color:#1a6fc4;transform:scaleX(0.9693);text-decoration:underline;">Click here</div>
<div class="t" style="left:417.5px;top:159.00px;font-size:7.54px;font-family:'Liberation Sans',sans-serif;color:#444;transform:scaleX(0.9746);">for more info.</div>
<div class="a" style="left:77.2px;top:170.8px;width:9.60px;height:9.00px;background:#fff;border:1px solid #b8b8b8;border-radius:2px"></div>
<div class="t" style="left:90.8px;top:172.00px;font-size:7.54px;font-family:'Liberation Sans',sans-serif;color:#444;transform:scaleX(0.9754);">Don't show again</div>
<svg class="a" style="left:517.6px;top:163.4px" width="8.6" height="8.6" viewBox="0 0 8.6 8.6"><path d="M0.5,0.5 L8.1,8.1 M8.1,0.5 L0.5,8.1" stroke="#8a8a8a" stroke-width="0.9"/></svg>
<div class="a" style="left:42.4px;top:192.4px;width:494.60px;height:183.80px;background:#fff;border:1px solid #dcdcdc"></div>
<div class="a" style="left:43.4px;top:193.4px;width:483.60px;height:17.80px;background:#f4f4f4;"></div>
<div class="a" style="left:48px;top:201.5px;width:8.00px;height:1.00px;background:#999;"></div>
<svg class="a" style="left:66.8px;top:196.8px" width="8" height="9" viewBox="0 0 8 9"><rect x="0.5" y="4.2" width="5.6" height="4.4" fill="#d4d4d4"/><path d="M4.2,4.4 V2.4 C4.2,0.4 7.4,0.4 7.4,2.4 V3.4" fill="none" stroke="#d4d4d4" stroke-width="0.9"/></svg>
<div class="a" style="left:43px;top:211.2px;width:484px;height:150.8px;overflow:hidden">
<div class="a" style="left:-43px;top:-211.2px;width:600px;height:600px">
<svg class="a" style="left:47.8px;top:217.0px" width="9.2" height="6.8" viewBox="0 0 9.2 6.8"><path d="M0.6,3.4 C2.6,0.4 6.6,0.4 8.6,3.4 C6.6,6.4 2.6,6.4 0.6,3.4Z" fill="#fff" stroke="#8a8a8a" stroke-width="1.1"/><circle cx="4.6" cy="3.4" r="1.7" fill="#8a8a8a"/></svg>
<svg class="a" style="left:66.8px;top:215.8px" width="8" height="9" viewBox="0 0 8 9"><rect x="0.5" y="4.2" width="5.6" height="4.4" fill="#c8c8c8"/><path d="M4.2,4.4 V2.4 C4.2,0.4 7.4,0.4 7.4,2.4 V3.4" fill="none" stroke="#c8c8c8" stroke-width="0.9"/></svg>
<div class="a" style="left:83.3px;top:215.8px;width:9.40px;height:9.00px;background:#d9486a;"></div>
<div class="t" style="left:103.01065686103352px;top:217.00px;font-size:8.10px;font-family:'Liberation Sans',sans-serif;color:#333;transform:scaleX(0.9300);transform:scaleX(0.93);">1</div>
<div class="t" style="left:111.9px;top:217.00px;font-size:8.10px;font-family:'Liberation Sans',sans-serif;color:#333;transform:scaleX(0.9300);">Top</div>
<svg class="a" style="left:505.3px;top:217.70000000000002px" width="5.4" height="5.4" viewBox="0 0 5.4 5.4"><circle cx="2.7" cy="2.7" r="2.6" fill="#6aa81e"/></svg>
<svg class="a" style="left:47.8px;top:234.55px" width="9.2" height="6.8" viewBox="0 0 9.2 6.8"><path d="M0.6,3.4 C2.6,0.4 6.6,0.4 8.6,3.4 C6.6,6.4 2.6,6.4 0.6,3.4Z" fill="#fff" stroke="#8a8a8a" stroke-width="1.1"/><circle cx="4.6" cy="3.4" r="1.7" fill="#8a8a8a"/></svg>
<svg class="a" style="left:66.8px;top:233.35000000000002px" width="8" height="9" viewBox="0 0 8 9"><rect x="0.5" y="4.2" width="5.6" height="4.4" fill="#c8c8c8"/><path d="M4.2,4.4 V2.4 C4.2,0.4 7.4,0.4 7.4,2.4 V3.4" fill="none" stroke="#c8c8c8" stroke-width="0.9"/></svg>
<div class="a" style="left:83.3px;top:233.35000000000002px;width:9.40px;height:9.00px;background:#1e90d0;"></div>
<div class="t" style="left:98.82131372206705px;top:235.00px;font-size:8.10px;font-family:'Liberation Sans',sans-serif;color:#333;transform:scaleX(0.9300);transform:scaleX(0.93);">16</div>
<div class="t" style="left:111.9px;top:235.00px;font-size:8.10px;font-family:'Liberation Sans',sans-serif;color:#333;transform:scaleX(0.9300);">Bottom</div>
<svg class="a" style="left:504px;top:233.95000000000002px" width="8" height="8" viewBox="0 0 8 8"><circle cx="4" cy="4" r="3.5" fill="none" stroke="#efefef" stroke-width="0.8"/></svg>
<svg class="a" style="left:47.8px;top:252.1px" width="9.2" height="6.8" viewBox="0 0 9.2 6.8"><path d="M0.6,3.4 C2.6,0.4 6.6,0.4 8.6,3.4 C6.6,6.4 2.6,6.4 0.6,3.4Z" fill="#fff" stroke="#8a8a8a" stroke-width="1.1"/><circle cx="4.6" cy="3.4" r="1.7" fill="#8a8a8a"/></svg>
<svg class="a" style="left:66.8px;top:250.9px" width="8" height="9" viewBox="0 0 8 9"><rect x="0.5" y="4.2" width="5.6" height="4.4" fill="#c8c8c8"/><path d="M4.2,4.4 V2.4 C4.2,0.4 7.4,0.4 7.4,2.4 V3.4" fill="none" stroke="#c8c8c8" stroke-width="0.9"/></svg>
<div class="a" style="left:83.3px;top:250.9px;width:9.40px;height:9.00px;background:#5cb87a;"></div>
<div class="t" style="left:98.82131372206705px;top:252.00px;font-size:8.10px;font-family:'Liberation Sans',sans-serif;color:#333;transform:scaleX(0.9300);transform:scaleX(0.93);">17</div>
<div class="t" style="left:111.9px;top:252.00px;font-size:8.10px;font-family:'Liberation Sans',sans-serif;color:#333;transform:scaleX(0.9300);">Pads</div>
<svg class="a" style="left:504px;top:251.5px" width="8" height="8" viewBox="0 0 8 8"><circle cx="4" cy="4" r="3.5" fill="none" stroke="#efefef" stroke-width="0.8"/></svg>
<svg class="a" style="left:47.8px;top:269.65000000000003px" width="9.2" height="6.8" viewBox="0 0 9.2 6.8"><path d="M0.6,3.4 C2.6,0.4 6.6,0.4 8.6,3.4 C6.6,6.4 2.6,6.4 0.6,3.4Z" fill="#fff" stroke="#8a8a8a" stroke-width="1.1"/><circle cx="4.6" cy="3.4" r="1.7" fill="#8a8a8a"/></svg>
<svg class="a" style="left:66.8px;top:268.45px" width="8" height="9" viewBox="0 0 8 9"><rect x="0.5" y="4.2" width="5.6" height="4.4" fill="#c8c8c8"/><path d="M4.2,4.4 V2.4 C4.2,0.4 7.4,0.4 7.4,2.4 V3.4" fill="none" stroke="#c8c8c8" stroke-width="0.9"/></svg>
<div class="a" style="left:83.3px;top:268.45px;width:9.40px;height:9.00px;background:#5cb87a;"></div>
<div class="t" style="left:98.82131372206705px;top:270.00px;font-size:8.10px;font-family:'Liberation Sans',sans-serif;color:#333;transform:scaleX(0.9300);transform:scaleX(0.93);">18</div>
<div class="t" style="left:111.9px;top:270.00px;font-size:8.10px;font-family:'Liberation Sans',sans-serif;color:#333;transform:scaleX(0.9300);">Vias</div>
<svg class="a" style="left:504px;top:269.05px" width="8" height="8" viewBox="0 0 8 8"><circle cx="4" cy="4" r="3.5" fill="none" stroke="#efefef" stroke-width="0.8"/></svg>
<svg class="a" style="left:47.8px;top:287.20000000000005px" width="9.2" height="6.8" viewBox="0 0 9.2 6.8"><path d="M0.6,3.4 C2.6,0.4 6.6,0.4 8.6,3.4 C6.6,6.4 2.6,6.4 0.6,3.4Z" fill="#fff" stroke="#8a8a8a" stroke-width="1.1"/><circle cx="4.6" cy="3.4" r="1.7" fill="#8a8a8a"/></svg>
<svg class="a" style="left:66.8px;top:286.0px" width="8" height="9" viewBox="0 0 8 9"><rect x="0.5" y="4.2" width="5.6" height="4.4" fill="#c8c8c8"/><path d="M4.2,4.4 V2.4 C4.2,0.4 7.4,0.4 7.4,2.4 V3.4" fill="none" stroke="#c8c8c8" stroke-width="0.9"/></svg>
<div class="a" style="left:83.3px;top:286.0px;width:9.40px;height:9.00px;background:#c9c9c9;"></div>
<div class="t" style="left:98.82131372206705px;top:288.00px;font-size:8.10px;font-family:'Liberation Sans',sans-serif;color:#333;transform:scaleX(0.9300);transform:scaleX(0.93);">19</div>
<div class="t" style="left:111.9px;top:288.00px;font-size:8.10px;font-family:'Liberation Sans',sans-serif;color:#333;transform:scaleX(0.9300);">Unrouted</div>
<svg class="a" style="left:504px;top:286.6px" width="8" height="8" viewBox="0 0 8 8"><circle cx="4" cy="4" r="3.5" fill="none" stroke="#efefef" stroke-width="0.8"/></svg>
<svg class="a" style="left:47.8px;top:304.75px" width="9.2" height="6.8" viewBox="0 0 9.2 6.8"><path d="M0.6,3.4 C2.6,0.4 6.6,0.4 8.6,3.4 C6.6,6.4 2.6,6.4 0.6,3.4Z" fill="#fff" stroke="#8a8a8a" stroke-width="1.1"/><circle cx="4.6" cy="3.4" r="1.7" fill="#8a8a8a"/></svg>
<svg class="a" style="left:66.8px;top:303.54999999999995px" width="8" height="9" viewBox="0 0 8 9"><rect x="0.5" y="4.2" width="5.6" height="4.4" fill="#c8c8c8"/><path d="M4.2,4.4 V2.4 C4.2,0.4 7.4,0.4 7.4,2.4 V3.4" fill="none" stroke="#c8c8c8" stroke-width="0.9"/></svg>
<div class="a" style="left:83.3px;top:303.54999999999995px;width:9.40px;height:9.00px;background:#5cb87a;"></div>
<div class="t" style="left:98.82131372206705px;top:305.00px;font-size:8.10px;font-family:'Liberation Sans',sans-serif;color:#333;transform:scaleX(0.9300);transform:scaleX(0.93);">20</div>
<div class="t" style="left:111.9px;top:305.00px;font-size:8.10px;font-family:'Liberation Sans',sans-serif;color:#333;transform:scaleX(0.9300);">BoardOutline</div>
<svg class="a" style="left:504px;top:304.15px" width="8" height="8" viewBox="0 0 8 8"><circle cx="4" cy="4" r="3.5" fill="none" stroke="#efefef" stroke-width="0.8"/></svg>
<svg class="a" style="left:47.8px;top:322.30000000000007px" width="9.2" height="6.8" viewBox="0 0 9.2 6.8"><path d="M0.6,3.4 C2.6,0.4 6.6,0.4 8.6,3.4 C6.6,6.4 2.6,6.4 0.6,3.4Z" fill="#fff" stroke="#8a8a8a" stroke-width="1.1"/><circle cx="4.6" cy="3.4" r="1.7" fill="#8a8a8a"/></svg>
<svg class="a" style="left:66.8px;top:321.1px" width="8" height="9" viewBox="0 0 8 9"><rect x="0.5" y="4.2" width="5.6" height="4.4" fill="#c8c8c8"/><path d="M4.2,4.4 V2.4 C4.2,0.4 7.4,0.4 7.4,2.4 V3.4" fill="none" stroke="#c8c8c8" stroke-width="0.9"/></svg>
<div class="a" style="left:83.3px;top:321.1px;width:9.40px;height:9.00px;background:#b9b9b9;"></div>
<div class="t" style="left:98.82131372206705px;top:323.00px;font-size:8.10px;font-family:'Liberation Sans',sans-serif;color:#333;transform:scaleX(0.9300);transform:scaleX(0.93);">21</div>
<div class="t" style="left:111.9px;top:323.00px;font-size:8.10px;font-family:'Liberation Sans',sans-serif;color:#333;transform:scaleX(0.9300);">SilkscreenTop</div>
<svg class="a" style="left:504px;top:321.70000000000005px" width="8" height="8" viewBox="0 0 8 8"><circle cx="4" cy="4" r="3.5" fill="none" stroke="#efefef" stroke-width="0.8"/></svg>
<svg class="a" style="left:47.8px;top:339.85px" width="9.2" height="6.8" viewBox="0 0 9.2 6.8"><path d="M0.6,3.4 C2.6,0.4 6.6,0.4 8.6,3.4 C6.6,6.4 2.6,6.4 0.6,3.4Z" fill="#fff" stroke="#8a8a8a" stroke-width="1.1"/><circle cx="4.6" cy="3.4" r="1.7" fill="#8a8a8a"/></svg>
<svg class="a" style="left:66.8px;top:338.65px" width="8" height="9" viewBox="0 0 8 9"><rect x="0.5" y="4.2" width="5.6" height="4.4" fill="#c8c8c8"/><path d="M4.2,4.4 V2.4 C4.2,0.4 7.4,0.4 7.4,2.4 V3.4" fill="none" stroke="#c8c8c8" stroke-width="0.9"/></svg>
<div class="a" style="left:83.3px;top:338.65px;width:9.40px;height:9.00px;background:#b9b9b9;"></div>
<div class="t" style="left:98.82131372206705px;top:340.00px;font-size:8.10px;font-family:'Liberation Sans',sans-serif;color:#333;transform:scaleX(0.9300);transform:scaleX(0.93);">22</div>
<div class="t" style="left:111.9px;top:340.00px;font-size:8.10px;font-family:'Liberation Sans',sans-serif;color:#333;transform:scaleX(0.9300);">SilkscreenBottom</div>
<svg class="a" style="left:504px;top:339.25px" width="8" height="8" viewBox="0 0 8 8"><circle cx="4" cy="4" r="3.5" fill="none" stroke="#efefef" stroke-width="0.8"/></svg>
<svg class="a" style="left:47.8px;top:357.40000000000003px" width="9.2" height="6.8" viewBox="0 0 9.2 6.8"><path d="M0.6,3.4 C2.6,0.4 6.6,0.4 8.6,3.4 C6.6,6.4 2.6,6.4 0.6,3.4Z" fill="#fff" stroke="#8a8a8a" stroke-width="1.1"/><circle cx="4.6" cy="3.4" r="1.7" fill="#8a8a8a"/></svg>
<svg class="a" style="left:66.8px;top:356.2px" width="8" height="9" viewBox="0 0 8 9"><rect x="0.5" y="4.2" width="5.6" height="4.4" fill="#c8c8c8"/><path d="M4.2,4.4 V2.4 C4.2,0.4 7.4,0.4 7.4,2.4 V3.4" fill="none" stroke="#c8c8c8" stroke-width="0.9"/></svg>
<div class="a" style="left:83.3px;top:356.2px;width:9.40px;height:9.00px;background:#b9b9b9;"></div>
<div class="t" style="left:98.82131372206705px;top:358.00px;font-size:8.10px;font-family:'Liberation Sans',sans-serif;color:#333;transform:scaleX(0.9300);transform:scaleX(0.93);">25</div>
<div class="t" style="left:111.9px;top:358.00px;font-size:8.10px;font-family:'Liberation Sans',sans-serif;color:#333;transform:scaleX(0.9300);">NamesTop</div>
<svg class="a" style="left:504px;top:356.8px" width="8" height="8" viewBox="0 0 8 8"><circle cx="4" cy="4" r="3.5" fill="none" stroke="#efefef" stroke-width="0.8"/></svg>
</div></div>
<div class="a" style="left:530.4px;top:192.6px;width:3.60px;height:53.00px;background:#a3a3a3;border-radius:2px"></div>
<svg class="a" style="left:46px;top:365.2px" width="8" height="8" viewBox="0 0 8 8"><path d="M4,0 V8 M0,4 H8" stroke="#666" stroke-width="1.1"/></svg>
<svg class="a" style="left:62.2px;top:365.6px" width="7" height="7" viewBox="0 0 7 7"><path d="M0.5,0.5 L6.5,6.5 M6.5,0.5 L0.5,6.5" stroke="#888" stroke-width="0.9"/></svg>
<svg class="a" style="left:45.8px;top:386.2px" width="4.4" height="7.4" viewBox="0 0 4.4 7.4"><path d="M0,0 L4.4,3.7 L0,7.4Z" fill="#8a8a8a"/></svg>
<div class="t" style="left:55.4px;top:387.00px;font-size:7.82px;font-family:'Liberation Sans',sans-serif;font-weight:bold;color:#4a5572;transform:scaleX(0.9943);">Details</div>
<div class="a" style="left:32px;top:408.3px;width:514.40px;height:14.90px;background:#f3f3f3;border-top:1px solid #dedede;border-bottom:1px solid #dedede;border-right:1px solid #e4e4e4"></div>
<div class="t" style="left:42.7px;top:413.00px;font-size:6.98px;font-family:'Liberation Sans',sans-serif;color:#666;transform:scaleX(0.8913);">INSPECTOR</div>
<svg class="a" style="left:539px;top:413.6px" width="5.8" height="4.6" viewBox="0 0 5.8 4.6"><path d="M0,2.3 L2.8,0 V4.6Z M3,2.3 L5.8,0 V4.6Z" fill="#222"/></svg>
<div class="a" style="left:83.3px;top:423.2px;width:244.10px;height:429.80px;background:#efefef;"></div>
<div class="a" style="left:32.5px;top:426.5px;width:295.30px;height:17.30px;background:#ececec;"></div>
<div class="a" style="left:32.5px;top:443.8px;width:295.30px;height:14.20px;background:#f4f4f4;"></div>
<div class="t" style="left:147.8px;top:431.00px;font-size:8.10px;font-family:'Liberation Sans',sans-serif;font-weight:bold;color:#222;transform:scaleX(0.9735);">Nothing Selected</div>
<div class="a" style="left:35.1px;top:444.2px;width:13.40px;height:13.60px;background:#1a9ad8;border-radius:1px"></div>
<svg class="a" style="left:38.6px;top:449.2px" width="6.4" height="4" viewBox="0 0 6.4 4"><path d="M0.6,0.6 L3.2,3.2 L5.8,0.6" fill="none" stroke="#0c2a40" stroke-width="1.3"/></svg>
<div class="t" style="left:49.8px;top:448.00px;font-size:8.10px;font-family:'Liberation Sans',sans-serif;font-weight:bold;color:#222;transform:scaleX(0.9558);">Board Information</div>
<div class="t" style="left:35.6px;top:464.00px;font-size:7.82px;font-family:'Liberation Sans',sans-serif;font-weight:bold;color:#222;transform:scaleX(0.9170);">Dimensions</div>
<div class="t" style="left:35.6px;top:507.00px;font-size:7.82px;font-family:'Liberation Sans',sans-serif;font-weight:bold;color:#222;transform:scaleX(0.9174);">Elements</div>
<div class="t" style="left:35.6px;top:563.00px;font-size:7.82px;font-family:'Liberation Sans',sans-serif;font-weight:bold;color:#222;transform:scaleX(0.8988);">Signals</div>
<div class="t" style="left:35.6px;top:605.00px;font-size:7.82px;font-family:'Liberation Sans',sans-serif;font-weight:bold;color:#222;transform:scaleX(0.9281);">Primitives</div>
<div class="t" style="left:99px;top:464.00px;font-size:7.00px;font-family:'Liberation Sans',sans-serif;color:#444;">Width:</div>
<div class="t" style="left:149.7px;top:464.00px;font-size:7.00px;font-family:'Liberation Sans',sans-serif;color:#2a2a2a;">131.4256875 mm</div>
<div class="t" style="left:99px;top:478.00px;font-size:7.00px;font-family:'Liberation Sans',sans-serif;color:#444;">Height:</div>
<div class="t" style="left:149.7px;top:478.00px;font-size:7.00px;font-family:'Liberation Sans',sans-serif;color:#2a2a2a;">1948.608390748 mil</div>
<div class="t" style="left:99px;top:506.00px;font-size:7.00px;font-family:'Liberation Sans',sans-serif;color:#444;">Total:</div>
<div class="t" style="left:149.7px;top:506.00px;font-size:7.00px;font-family:'Liberation Sans',sans-serif;color:#2a2a2a;">0</div>
<div class="t" style="left:99px;top:520.00px;font-size:7.00px;font-family:'Liberation Sans',sans-serif;color:#444;">Top:</div>
<div class="t" style="left:149.7px;top:520.00px;font-size:7.00px;font-family:'Liberation Sans',sans-serif;color:#2a2a2a;">0</div>
<div class="t" style="left:99px;top:534.00px;font-size:7.00px;font-family:'Liberation Sans',sans-serif;color:#444;">Bottom:</div>
<div class="t" style="left:149.7px;top:534.00px;font-size:7.00px;font-family:'Liberation Sans',sans-serif;color:#2a2a2a;">0</div>
<div class="t" style="left:99px;top:562.00px;font-size:7.00px;font-family:'Liberation Sans',sans-serif;color:#444;">Total:</div>
<div class="t" style="left:149.7px;top:562.00px;font-size:7.00px;font-family:'Liberation Sans',sans-serif;color:#2a2a2a;">0</div>
<div class="t" style="left:99px;top:577.00px;font-size:7.00px;font-family:'Liberation Sans',sans-serif;color:#444;">Airwires:</div>
<div class="t" style="left:149.7px;top:577.00px;font-size:7.00px;font-family:'Liberation Sans',sans-serif;color:#2a2a2a;">0</div>
<div class="t" style="left:99px;top:605.00px;font-size:7.00px;font-family:'Liberation Sans',sans-serif;color:#444;">Pads:</div>
<div class="t" style="left:149.7px;top:605.00px;font-size:7.00px;font-family:'Liberation Sans',sans-serif;color:#2a2a2a;">0</div>
<div class="t" style="left:99px;top:619.00px;font-size:7.00px;font-family:'Liberation Sans',sans-serif;color:#444;">Vias:</div>
<div class="t" style="left:149.7px;top:619.00px;font-size:7.00px;font-family:'Liberation Sans',sans-serif;color:#2a2a2a;">0</div>
<div class="t" style="left:99px;top:633.00px;font-size:7.00px;font-family:'Liberation Sans',sans-serif;color:#444;">Holes:</div>
<div class="t" style="left:149.7px;top:633.00px;font-size:7.00px;font-family:'Liberation Sans',sans-serif;color:#2a2a2a;">0</div>
<div class="t" style="left:99px;top:647.00px;font-size:7.00px;font-family:'Liberation Sans',sans-serif;color:#444;">Copper Pours:</div>
<div class="t" style="left:149.7px;top:647.00px;font-size:7.00px;font-family:'Liberation Sans',sans-serif;color:#2a2a2a;">0</div>
<svg class="a" style="left:1981px;top:112.8px" width="6.6" height="6.6" viewBox="0 0 6.6 6.6"><path d="M0.6,0.6 L6,6 M6,0.6 L0.6,6" stroke="#fff" stroke-width="1.5"/></svg>
<div class="a" style="left:553.2px;top:128.5px;width:137.40px;height:15.30px;background:#fff;border:1px solid #cfcfcf"></div>
<div class="a" style="left:556px;top:130.5px;width:11.60px;height:11.50px;background:#d9486a;"></div>
<div class="t" style="left:571.3px;top:134.00px;font-size:8.10px;font-family:'Liberation Sans',sans-serif;color:#222;transform:scaleX(0.9406);">1 Top</div>
<svg class="a" style="left:684.6px;top:135.2px" width="3.6" height="2.8" viewBox="0 0 3.6 2.8"><path d="M0,0.5 L2.6,0.5 L1.3,2.3Z" fill="#444"/></svg>
<div class="t" style="left:702px;top:133.00px;font-size:7.82px;font-family:'Liberation Sans',sans-serif;color:#333;transform:scaleX(0.9845);">50 mil (1505 1291)</div>
<div class="a" style="left:788.2px;top:128.6px;width:1204.00px;height:15.00px;background:#f7f7f7;border:1px solid #d4d4d4"></div>
<div class="t" style="left:792px;top:133.00px;font-size:7.54px;font-family:'Liberation Sans',sans-serif;color:#a8a8a8;transform:scaleX(1.0458);">Click or press / to activate command line mode</div>
<svg class="a" style="left:1985.4px;top:134.79999999999998px" width="3.6" height="2.8" viewBox="0 0 3.6 2.8"><path d="M0,0.5 L2.6,0.5 L1.3,2.3Z" fill="#555"/></svg>
<div class="a" style="left:1999.4px;top:108.7px;width:13.20px;height:110.10px;background:#f5f5f5;border:1px solid #e2e2e2"></div>
<svg class="a" style="left:2003.6px;top:110.2px" width="5.8" height="4.2" viewBox="0 0 5.8 4.2"><path d="M0,2.1 L2.8,0 V4.2Z M3,2.1 L5.8,0 V4.2Z" fill="#222"/></svg>
<div class="t" style="left:2006.7px;top:166px;font-size:6.6px;color:#666;transform:translate(-50%,-50%) rotate(-90deg);transform-origin:50% 50%;font-family:'Liberation Sans',sans-serif">SELECTION FILTER</div>
<div class="a" style="left:1990.6px;top:340.6px;width:3.40px;height:483.20px;background:#a9a9a9;border-radius:2px"></div>
<div class="a" style="left:549px;top:824.5px;width:1439.00px;height:2.50px;background:#f7f7f7;"></div>
<div class="a" style="left:548.8px;top:828.6px;width:1160.20px;height:3.00px;background:#a6a6a6;border-radius:2px"></div>
<svg class="a" style="left:1989.2px;top:826.8px" width="6" height="6" viewBox="0 0 6 6"><circle cx="3" cy="3" r="2.6" fill="#222"/><path d="M1.6,3.4 L4.2,1.6 L3.6,4.2Z" fill="#eee"/></svg>
<div class="a" style="left:1195.1px;top:809.3px;width:155.50px;height:13.90px;background:#f0f0f0;"></div>
<svg class="a" style="left:1197.1px;top:811.2px" width="8.8" height="8.8" viewBox="0 0 8.8 8.8"><circle cx="4.4" cy="4.4" r="4.4" fill="#1d8fd6"/><rect x="3.7" y="3.6" width="1.4" height="3.6" fill="#fff"/><circle cx="4.4" cy="2.2" r="0.75" fill="#fff"/></svg>
<svg class="a" style="left:1212.2px;top:812.9px" width="9.4" height="5.4" viewBox="0 0 9.4 5.4"><path d="M0.4,2.7 C2.6,-0.4 6.8,-0.4 9,2.7 C6.8,5.8 2.6,5.8 0.4,2.7Z" fill="none" stroke="#888" stroke-width="0.9"/><circle cx="4.7" cy="2.7" r="1.5" fill="#777"/></svg>
<svg class="a" style="left:1227.4px;top:810.8px" width="10" height="10" viewBox="0 0 10 10"><circle cx="4" cy="4" r="3.4" fill="none" stroke="#8a8a8a" stroke-width="0.9"/><path d="M6.4,6.4 L9.4,9.4" stroke="#8a8a8a" stroke-width="1.1"/><path d="M4,2.2 V5.8 M2.2,4 H5.8" stroke="#8a8a8a" stroke-width="0.8"/></svg>
<svg class="a" style="left:1242.3000000000002px;top:810.8px" width="10" height="10" viewBox="0 0 10 10"><circle cx="4" cy="4" r="3.4" fill="none" stroke="#8a8a8a" stroke-width="0.9"/><path d="M6.4,6.4 L9.4,9.4" stroke="#8a8a8a" stroke-width="1.1"/><path d="M2.2,4 H5.8" stroke="#8a8a8a" stroke-width="0.8"/></svg>
<svg class="a" style="left:1257.8000000000002px;top:810.8px" width="10" height="10" viewBox="0 0 10 10"><circle cx="4" cy="4" r="3.4" fill="none" stroke="#8a8a8a" stroke-width="0.9"/><path d="M6.4,6.4 L9.4,9.4" stroke="#8a8a8a" stroke-width="1.1"/><rect x="2.4" y="2.4" width="3.2" height="3.2" fill="none" stroke="#8a8a8a" stroke-width="0.7"/></svg>
<svg class="a" style="left:1273.2px;top:811.2px" width="8.6" height="8.6" viewBox="0 0 8.6 8.6"><path d="M2.6,0 V8.6 M6,0 V8.6 M0,2.6 H8.6 M0,6 H8.6" stroke="#777" stroke-width="0.9"/></svg>
<svg class="a" style="left:1288.2px;top:811px" width="9.4" height="9.4" viewBox="0 0 9.4 9.4"><path d="M4.7,0 V9.4 M0,4.7 H9.4" stroke="#777" stroke-width="0.8"/></svg>
<svg class="a" style="left:1303.3px;top:811.2px" width="9" height="9" viewBox="0 0 9 9"><circle cx="4.5" cy="4.5" r="4.4" fill="#e03a3a"/><rect x="2" y="3.7" width="5" height="1.6" fill="#fff"/></svg>
<div class="a" style="left:1316.9px;top:809px;width:15.10px;height:14.00px;background:#1d9ad8;"></div>
<svg class="a" style="left:1318.2px;top:810.6px" width="12.4" height="12" viewBox="0 0 12.4 12"><rect x="0.5" y="0.8" width="9" height="7" fill="none" stroke="#9ad4f2" stroke-width="0.6" stroke-dasharray="1 1"/><path d="M7,5.6 V11.2 L8.4,10 L9.4,12 L10.4,11.5 L9.5,9.6 L11.3,9.4Z" fill="#fff"/></svg>
<svg class="a" style="left:1334.8px;top:811.6px" width="9" height="8.6" viewBox="0 0 9 8.6"><path d="M0.6,0 V8.6 M0.6,4.6 H5 C7.4,4.6 7.4,1.2 5,1.2 H0.6" fill="none" stroke="#9a9a9a" stroke-width="0.8"/></svg>
<svg class="a" style="left:1344.8px;top:814.4px" width="3.6" height="2.8" viewBox="0 0 3.6 2.8"><path d="M0,0.5 L2.6,0.5 L1.3,2.3Z" fill="#333"/></svg>
<div class="t" style="left:549.7px;top:842.00px;font-size:7.62px;font-family:'Liberation Mono',monospace;color:#111;">Left-click diagonal drag to select objects</div>
<div class="a" style="left:547.6px;top:146px;width:1.40px;height:707.00px;background:#eeeeee;"></div>
</div></div>
<div style="position:absolute;left:32px;top:21px;width:1984px;height:832px;border-radius:5px 5px 7px 7px;border:1px solid rgba(255,255,255,0.75);border-top:none;pointer-events:none"></div>
</body></html>
